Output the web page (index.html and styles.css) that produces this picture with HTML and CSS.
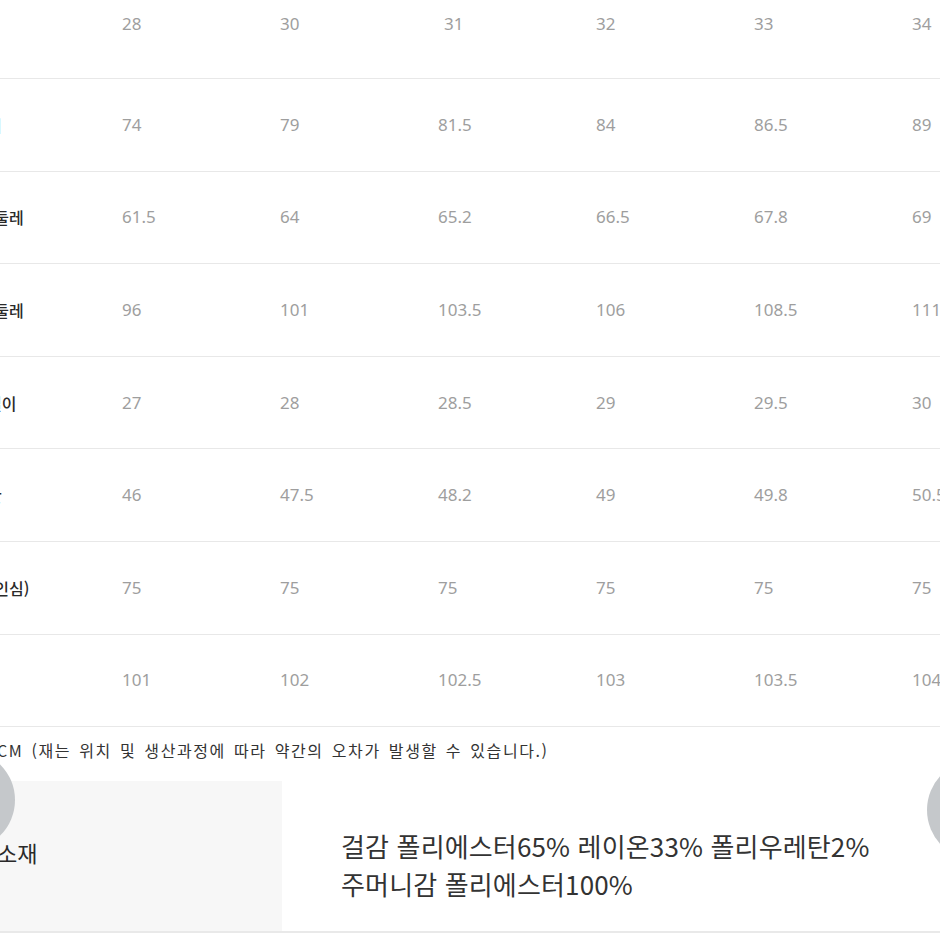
FILE: index.html
```html
<!DOCTYPE html>
<html lang="ko">
<head>
<meta charset="utf-8">
<title>사이즈 정보</title>
<link rel="stylesheet" href="styles.css">
</head>
<body>
<div class="page">
  <div class="size-table">
    <div class="row head">
      <div class="label"></div>
      <div class="cell">28</div><div class="cell">30</div><div class="cell shift">31</div><div class="cell">32</div><div class="cell">33</div><div class="cell">34</div>
    </div>
    <div class="row">
      <div class="label">허리</div>
      <div class="cell">74</div><div class="cell">79</div><div class="cell">81.5</div><div class="cell">84</div><div class="cell">86.5</div><div class="cell">89</div>
    </div>
    <div class="row">
      <div class="label">허벅지둘레</div>
      <div class="cell">61.5</div><div class="cell">64</div><div class="cell">65.2</div><div class="cell">66.5</div><div class="cell">67.8</div><div class="cell">69</div>
    </div>
    <div class="row">
      <div class="label">엉덩이둘레</div>
      <div class="cell">96</div><div class="cell">101</div><div class="cell">103.5</div><div class="cell">106</div><div class="cell">108.5</div><div class="cell">111</div>
    </div>
    <div class="row">
      <div class="label">밑위길이</div>
      <div class="cell">27</div><div class="cell">28</div><div class="cell">28.5</div><div class="cell">29</div><div class="cell">29.5</div><div class="cell">30</div>
    </div>
    <div class="row">
      <div class="label">밑단</div>
      <div class="cell">46</div><div class="cell">47.5</div><div class="cell">48.2</div><div class="cell">49</div><div class="cell">49.8</div><div class="cell">50.5</div>
    </div>
    <div class="row">
      <div class="label">총기장(인심)</div>
      <div class="cell">75</div><div class="cell">75</div><div class="cell">75</div><div class="cell">75</div><div class="cell">75</div><div class="cell">75</div>
    </div>
    <div class="row">
      <div class="label short">총장</div>
      <div class="cell">101</div><div class="cell">102</div><div class="cell">102.5</div><div class="cell">103</div><div class="cell">103.5</div><div class="cell">104</div>
    </div>
  </div>

  <p class="note">CM (재는 위치 및 생산과정에 따라 약간의 오차가 발생할 수 있습니다.)</p>

  <div class="material">
    <div class="mat-label">소재</div>
    <div class="mat-value">
      <div>걸감 폴리에스터65% 레이온33% 폴리우레탄2%</div>
      <div>주머니감 폴리에스터100%</div>
    </div>
  </div>

  <span class="nav nav-prev"></span>
  <span class="nav nav-next"></span>
</div>
</body>
</html>
```
FILE: styles.css
```css
html, body {
  margin: 0;
  padding: 0;
  background: #ffffff;
}

.page {
  position: relative;
  width: 940px;
  height: 940px;
  overflow: hidden;
  font-family: "Noto Sans", "Noto Sans CJK KR", sans-serif;
}

.size-table {
  margin-left: -148px;
  width: 1218px;
}

.row {
  display: grid;
  grid-template-columns: 270px repeat(6, 158px);
  align-items: center;
  box-sizing: border-box;
  height: 92.6px;
  border-bottom: 1px solid #e8e8e8;
}

.row.head {
  height: 79px;
  align-items: start;
  padding-top: 12px;
}

.label {
  text-align: center;
  font-family: "Noto Sans CJK KR", sans-serif;
  font-size: 16px;
  font-weight: 500;
  color: #2a2a2a;
  white-space: nowrap;
}

.label.short {
  padding-right: 10px;
}

.cell {
  font-size: 17px;
  color: #9e9e9e;
  line-height: 24px;
}

.cell.shift {
  padding-left: 6px;
}

.note {
  margin: 0 0 0 -3px;
  height: 54px;
  padding-top: 11px;
  box-sizing: border-box;
  font-family: "Noto Sans CJK KR", sans-serif;
  font-size: 16px;
  letter-spacing: 1.6px;
  word-spacing: 2px;
  line-height: 24px;
  color: #333333;
  white-space: nowrap;
}

.material {
  display: grid;
  grid-template-columns: 282px 1fr;
  height: 152px;
  border-bottom: 2px solid #e9e9e9;
  box-sizing: border-box;
}

.mat-label {
  background: #f7f7f7;
  display: flex;
  align-items: center;
  margin-left: -3px;
  padding-bottom: 8px;
  font-family: "Noto Sans CJK KR", sans-serif;
  font-size: 22px;
  color: #2a2a2a;
}

.mat-value {
  padding: 46px 0 0 59px;
  font-family: "Noto Sans CJK KR", sans-serif;
  font-size: 26px;
  letter-spacing: 0.15px;
  line-height: 38px;
  color: #333333;
  white-space: nowrap;
}

.nav {
  position: absolute;
  width: 100px;
  height: 100px;
  border-radius: 50%;
  background: #c5c8cb;
}

.nav-prev {
  left: -85px;
  top: 750px;
}

.nav-next {
  left: 927px;
  top: 760px;
}
```
